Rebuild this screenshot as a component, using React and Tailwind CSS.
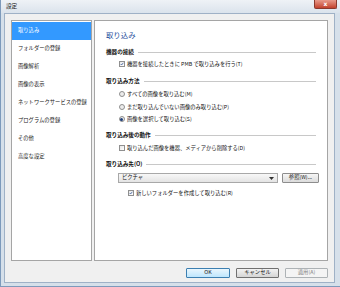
const JP = "font-['Noto_Sans_CJK_JP','Noto_Sans',sans-serif]"

const NAV = [
  '取り込み',
  'フォルダーの登録',
  '画像解析',
  '画像の表示',
  'ネットワークサービスの登録',
  'プログラムの登録',
  'その他',
  '高度な設定',
]

function Heading({ children, className = '' }) {
  return (
    <div className={`flex items-center h-[10px] pr-[11px] ${className}`}>
      <span className="text-[5.6px] font-bold text-[#111] whitespace-nowrap leading-[10px]">{children}</span>
      <div className="flex-1 h-px bg-[#c8c8c8] ml-[4px]" />
    </div>
  )
}

function Check({ checked, children, className = '' }) {
  return (
    <div className={`flex items-center h-[10px] ${className}`}>
      <div className="w-[6px] h-[6px] border border-[#8f8f8f] bg-gradient-to-br from-[#e6e6e6] to-white flex items-center justify-center">
        {checked && (
          <svg width="6" height="6" viewBox="0 0 6 6">
            <path d="M1 3 L2.4 4.5 L5 1.2" stroke="#2a4f95" strokeWidth="1.1" fill="none" />
          </svg>
        )}
      </div>
      <span className="ml-[2px] text-[5.3px] text-[#111] leading-[10px] whitespace-nowrap">{children}</span>
    </div>
  )
}

function Radio({ checked, children, className = '' }) {
  return (
    <div className={`flex items-center h-[10px] ${className}`}>
      <div className="w-[6px] h-[6px] rounded-full border border-[#8f8f8f] bg-[#ececec] flex items-center justify-center">
        {checked && <div className="w-[3px] h-[3px] rounded-full bg-[#1f3f7a]" />}
      </div>
      <span className="ml-[2px] text-[5.3px] text-[#111] leading-[10px] whitespace-nowrap">{children}</span>
    </div>
  )
}

export default function App() {
  return (
    <div className={`w-[340px] h-[287px] bg-[#d6e0ea] border-l border-b border-[#7d9abb] flex flex-col ${JP}`}>
      {/* Title bar */}
      <div className="h-[13px] flex items-start bg-gradient-to-b from-[#eef2f6] to-[#dbe3ec] relative">
        <span className="ml-[5px] mt-[2px] text-[5.6px] text-[#222] leading-[9px]">設定</span>
        <div className="absolute right-[3px] top-0 w-[23px] h-[9px] rounded-b-[2px] bg-gradient-to-b from-[#e89a8a] to-[#c2412c] border border-[#8a3a2e] border-t-0 flex items-center justify-center">
          <span className="text-white text-[6px] font-bold leading-none font-['DejaVu_Sans',sans-serif]">x</span>
        </div>
      </div>

      {/* Client area */}
      <div className="flex-1 ml-[3px] mr-[5px] mb-[3px] bg-[#f0f0f0] border border-[#9fb1c6] flex flex-col px-[6px] pt-[6px]">
        <div className="flex gap-[2px] h-[241px]">
          {/* Left nav */}
          <div className="w-[82px] bg-white border border-[#a5a5a5] pt-[1px]">
            {NAV.map((item, i) => (
              <div
                key={item}
                className={`h-[18px] flex items-center pl-[6px] text-[5.3px] leading-none whitespace-nowrap ${
                  i === 0 ? 'bg-[#3399ff] text-white' : 'text-[#222]'
                }`}
              >
                {item}
              </div>
            ))}
          </div>

          {/* Right panel */}
          <div className="w-[237px] bg-white border border-[#a5a5a5] pl-[11px] pt-[9px]">
            <div className="h-[10px] text-[7.4px] text-[#1c4b9a] leading-[10px]">取り込み</div>

            <Heading className="mt-[7px]">機器の接続</Heading>
            <Check checked className="mt-[2px] ml-[13px]">機器を接続したときに PMB で取り込みを行う(T)</Check>

            <Heading className="mt-[7px]">取り込み方法</Heading>
            <Radio className="mt-[3px] ml-[13px]">すべての画像を取り込む(M)</Radio>
            <Radio className="mt-[3px] ml-[13px]">まだ取り込んでいない画像のみ取り込む(P)</Radio>
            <Radio checked className="mt-[2px] ml-[13px]">画像を選択して取り込む(S)</Radio>

            <Heading className="mt-[6px]">取り込み後の動作</Heading>
            <Check className="mt-[3px] ml-[13px]">取り込んだ画像を機器、メディアから削除する(D)</Check>

            <Heading className="mt-[6px]">取り込み先(O)</Heading>
            <div className="flex items-center mt-[4px] ml-[12px] h-[10px]">
              <div className="w-[160px] h-[10px] border border-[#a8a8a8] bg-gradient-to-b from-[#f8f8f8] to-[#e4e4e4] flex items-center px-[3px]">
                <span className="flex-1 text-[5.3px] text-[#111] leading-none">ピクチャ</span>
                <svg width="5" height="3" viewBox="0 0 5 3">
                  <path d="M0 0 L5 0 L2.5 3 Z" fill="#333" />
                </svg>
              </div>
              <div className="ml-[4px] w-[37px] h-[10px] border border-[#8d8d8d] rounded-[1px] bg-gradient-to-b from-[#f6f6f6] to-[#dcdcdc] flex items-center justify-center text-[5.3px] text-[#111] leading-none">
                参照(W)...
              </div>
            </div>
            <Check checked className="mt-[5px] ml-[22px]">新しいフォルダーを作成して取り込む(R)</Check>
          </div>
        </div>

        {/* Buttons */}
        <div className="flex justify-end gap-[6px] mt-[7px]">
          <div className="w-[44px] h-[10px] border border-[#3c7fb1] rounded-[1px] bg-gradient-to-b from-[#eaf6fd] to-[#bee6fd] flex items-center justify-center text-[5.3px] text-[#111] leading-none">
            OK
          </div>
          <div className="w-[43px] h-[10px] border border-[#707070] rounded-[1px] bg-gradient-to-b from-[#f2f2f2] to-[#d5d5d5] flex items-center justify-center text-[5.3px] text-[#111] leading-none">
            キャンセル
          </div>
          <div className="w-[43px] h-[10px] border border-[#adb2b5] rounded-[1px] bg-[#f4f4f4] flex items-center justify-center text-[5.3px] text-[#838383] leading-none">
            適用(A)
          </div>
        </div>
      </div>
    </div>
  )
}
